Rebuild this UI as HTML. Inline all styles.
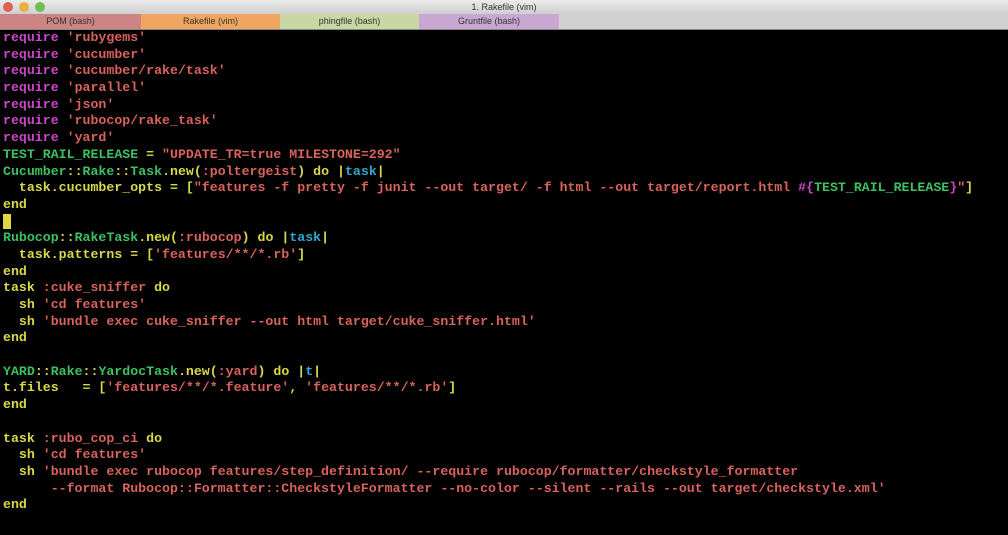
<!DOCTYPE html>
<html><head><meta charset="utf-8"><style>
body{margin:0;width:1008px;height:535px;background:#000;overflow:hidden;font-family:"Liberation Sans",sans-serif}
#title{position:absolute;left:0;top:0;width:1008px;height:14px;background:linear-gradient(#ececec,#cfcfcf);font-size:9px;color:#333;text-align:center;line-height:14px}
.dot{position:absolute;top:2px;width:10px;height:10px;border-radius:50%}
#tabs{position:absolute;top:14px;left:0;width:1008px;height:15px;background:#d2d2d2;border-bottom:1px solid #888}
.tab{position:absolute;top:0;height:15px;font-size:9px;line-height:15px;text-align:center;color:#333}
pre{position:absolute;left:3px;top:30px;margin:0;font-family:"Liberation Mono",monospace;font-weight:bold;font-size:13.25px;line-height:16.68px;color:#d8d84a}
.m{color:#c848c8}.s{color:#d8625c}.g{color:#3cc060}.c{color:#30a8cc}.y{color:#d8d84a}
.cur{background:#e0d840}
</style></head><body>
<div id="title">1. Rakefile (vim)
<div class="dot" style="left:3px;background:#e0605a"></div>
<div class="dot" style="left:19px;background:#e8b040"></div>
<div class="dot" style="left:35px;background:#70c050"></div>
</div>
<div id="tabs">
<div class="tab" style="left:0;width:141px;background:#cc8484">POM (bash)</div>
<div class="tab" style="left:141px;width:139px;background:#f0a660">Rakefile (vim)</div>
<div class="tab" style="left:280px;width:139px;background:#c8d8a2">phingfile (bash)</div>
<div class="tab" style="left:419px;width:140px;background:#c8a8d2">Gruntfile (bash)</div>
</div>
<pre><span class="m">require</span> <span class="s">'rubygems'</span>
<span class="m">require</span> <span class="s">'cucumber'</span>
<span class="m">require</span> <span class="s">'cucumber/rake/task'</span>
<span class="m">require</span> <span class="s">'parallel'</span>
<span class="m">require</span> <span class="s">'json'</span>
<span class="m">require</span> <span class="s">'rubocop/rake_task'</span>
<span class="m">require</span> <span class="s">'yard'</span>
<span class="g">TEST_RAIL_RELEASE</span> = <span class="s">"UPDATE_TR=true MILESTONE=292"</span>
<span class="g">Cucumber</span>::<span class="g">Rake</span>::<span class="g">Task</span>.new(<span class="s">:poltergeist</span>) do |<span class="c">task</span>|
  task.cucumber_opts = [<span class="s">"features -f pretty -f junit --out target/ -f html --out target/report.html </span><span class="m">#{</span><span class="g">TEST_RAIL_RELEASE</span><span class="m">}</span><span class="s">"</span>]
end
<span class="cur"> </span>
<span class="g">Rubocop</span>::<span class="g">RakeTask</span>.new(<span class="s">:rubocop</span>) do |<span class="c">task</span>|
  task.patterns = [<span class="s">'features/**/*.rb'</span>]
end
task <span class="s">:cuke_sniffer</span> do
  sh <span class="s">'cd features'</span>
  sh <span class="s">'bundle exec cuke_sniffer --out html target/cuke_sniffer.html'</span>
end

<span class="g">YARD</span>::<span class="g">Rake</span>::<span class="g">YardocTask</span>.new(<span class="s">:yard</span>) do |<span class="c">t</span>|
t.files   = [<span class="s">'features/**/*.feature'</span>, <span class="s">'features/**/*.rb'</span>]
end

task <span class="s">:rubo_cop_ci</span> do
  sh <span class="s">'cd features'</span>
  sh <span class="s">'bundle exec rubocop features/step_definition/ --require rubocop/formatter/checkstyle_formatter</span>
<span class="s">      --format Rubocop::Formatter::CheckstyleFormatter --no-color --silent --rails --out target/checkstyle.xml'</span>
end</pre>
</body></html>
